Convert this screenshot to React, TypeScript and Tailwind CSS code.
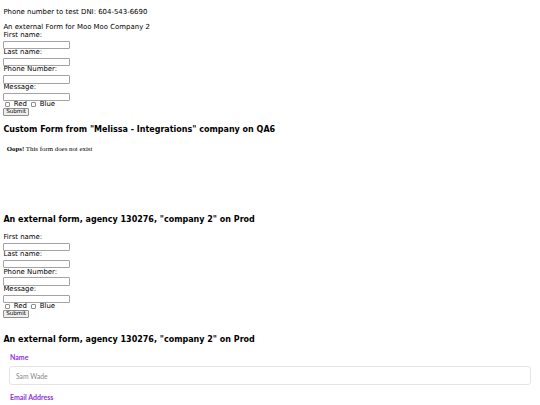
import React from 'react';

const sans = "font-['DejaVu_Sans',sans-serif]";

const Field: React.FC<{ label: string }> = ({ label }) => (
  <>
    <div className="h-[7.85px] leading-[7.85px]">{label}</div>
    <div className="h-[9.55px] pt-[1px]">
      <input
        type="text"
        className="block w-[67px] h-[8.5px] border border-[#a3a3a3] rounded-[1px] bg-white"
      />
    </div>
  </>
);

const PlainForm: React.FC<{ className?: string }> = ({ className = '' }) => (
  <form className={`text-[6.95px] ${className}`}>
    <Field label="First name:" />
    <Field label="Last name:" />
    <Field label="Phone Number:" />
    <Field label="Message:" />
    <div className="h-[6.5px] flex items-center leading-none">
      <input
        type="checkbox"
        className="appearance-none ml-[1.7px] mr-[1.3px] w-[5.4px] h-[5.4px] border border-[#8f8f8f] rounded-[1px] bg-white"
      />
      <span className="pl-[2.1px]">Red</span>
      <input
        type="checkbox"
        className="appearance-none ml-[3.9px] mr-[1.3px] w-[5.4px] h-[5.4px] border border-[#8f8f8f] rounded-[1px] bg-white"
      />
      <span className="pl-[2.1px]">Blue</span>
    </div>
    <div className="h-[9px] pt-[0.5px]">
      <button
        type="button"
        className="block h-[7.6px] px-[1.8px] text-[5.6px] leading-none border border-[#8f8f8f] rounded-[1px] bg-[#efefef] text-black"
      >
        Submit
      </button>
    </div>
  </form>
);

const Heading: React.FC<{ children: React.ReactNode }> = ({ children }) => (
  <h3 className="text-[8px] leading-[9.2px] font-bold my-[7.9px]">{children}</h3>
);

export default function App() {
  return (
    <div className={`${sans} w-[540px] h-[405px] overflow-hidden bg-white text-black px-[3.375px]`}>
      <p className="pt-[8.5px] text-[6.95px] leading-[7.85px]">Phone number to test DNI: 604-543-6690</p>

      <div className="mt-[7.5px]">
        <div className="text-[6.95px] leading-[7.85px]">An external Form for Moo Moo Company 2</div>
        <PlainForm />
      </div>

      <Heading>Custom Form from "Melissa - Integrations" company on QA6</Heading>
      {/* embedded form that failed to load */}
      <div className="h-[65px] w-[126px] pt-[3.4px] pl-[3.4px] font-['Liberation_Serif',serif] text-[6.85px] leading-[7.8px]">
        <b>Oops!</b> This form does not exist
      </div>

      <Heading>An external form, agency 130276, "company 2" on Prod</Heading>
      <PlainForm className="pt-[2px]" />

      <div className="pt-[8.4px]">
        <Heading>An external form, agency 130276, "company 2" on Prod</Heading>
      </div>

      {/* styled embed */}
      <div className="font-['Lato',sans-serif] px-[5.6px] pt-[1px]">
        <label className="block text-[7px] leading-[8px] font-bold text-[#8f2fe0] pl-[1px]">Name</label>
        <input
          type="text"
          placeholder="Sam Wade"
          className="mt-[5px] block w-full h-[19px] px-[6px] border border-[#e4e4e4] rounded-[3px] text-[6.8px] placeholder:text-[#8a8a8a] bg-white"
        />
        <label className="block mt-[8px] text-[7px] leading-[8px] font-bold text-[#8f2fe0] pl-[1px]">Email Address</label>
      </div>
    </div>
  );
}
